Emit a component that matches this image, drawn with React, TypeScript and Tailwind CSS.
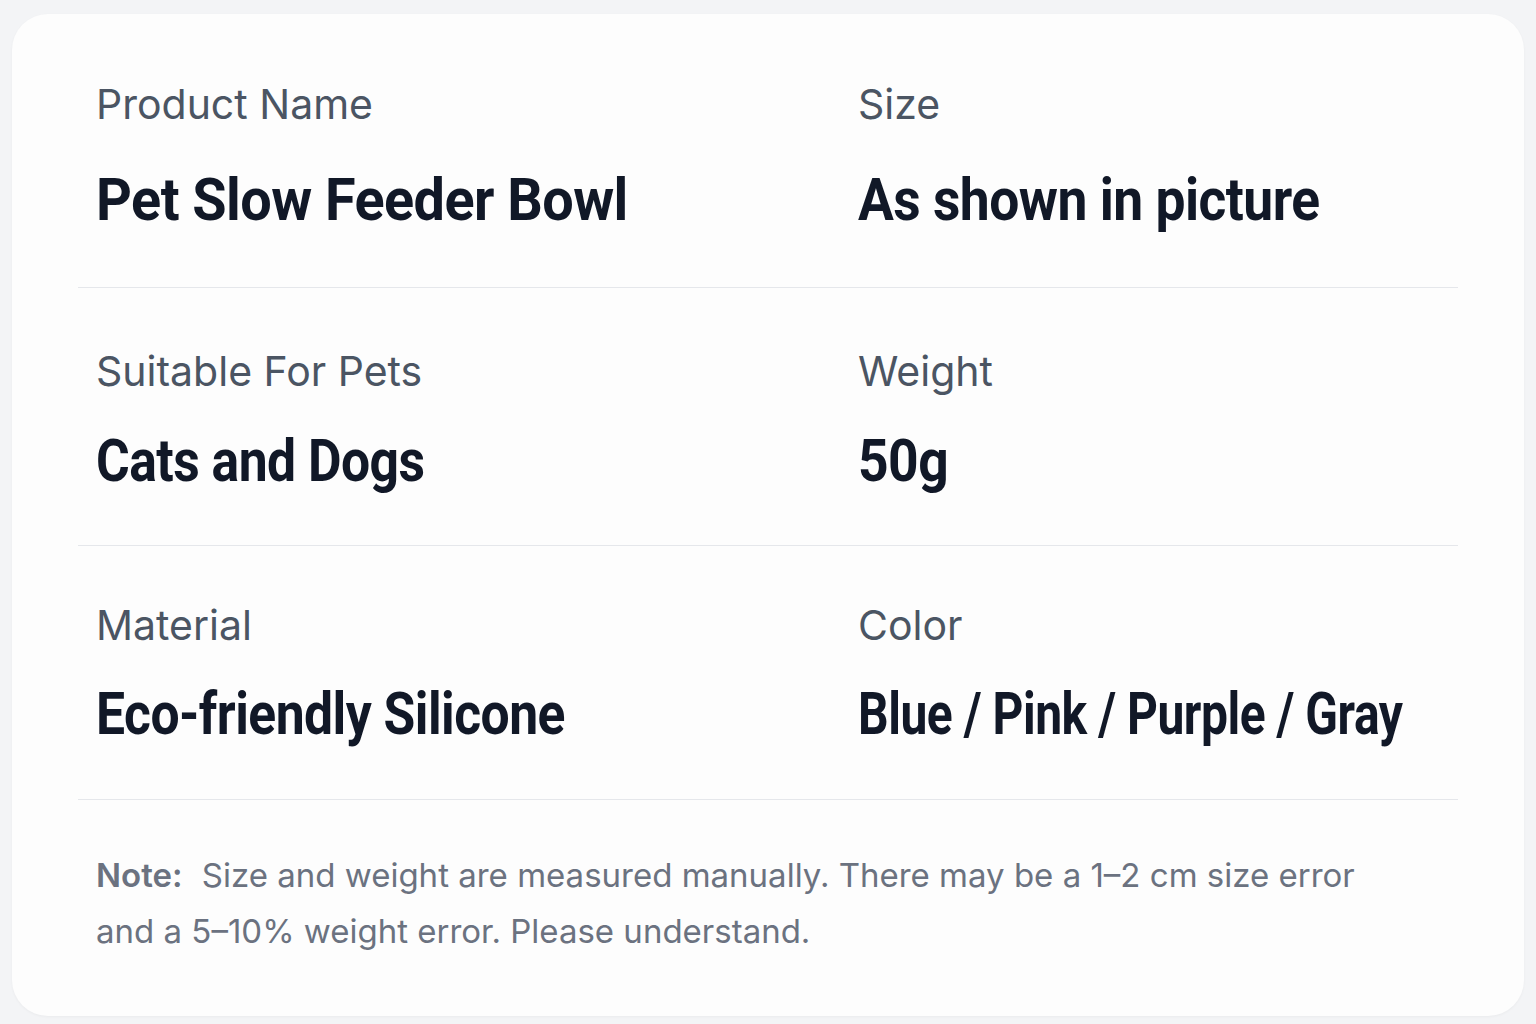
const specs = [
  {
    pad: "pt-[49px] pb-[53px]",
    gap: "gap-[37px]",
    cells: [
      { label: "Product Name", value: "Pet Slow Feeder Bowl", fit: "scale-x-[0.93]" },
      { label: "Size", value: "As shown in picture", fit: "scale-x-[0.89]" },
    ],
  },
  {
    pad: "pt-[58px] pb-[50px]",
    gap: "gap-[31px]",
    cells: [
      { label: "Suitable For Pets", value: "Cats and Dogs", fit: "scale-x-[0.86]" },
      { label: "Weight", value: "50g", fit: "scale-x-[0.89]" },
    ],
  },
  {
    pad: "pt-[54px] pb-[51px]",
    gap: "gap-[30px]",
    cells: [
      { label: "Material", value: "Eco-friendly Silicone", fit: "scale-x-[0.86]" },
      { label: "Color", value: "Blue / Pink / Purple / Gray", fit: "scale-x-[0.8]" },
    ],
  },
];

const App = () => {
  return (
    <div className="min-h-screen bg-[#f3f4f6] pl-[12px] pr-[12px] pt-[14px] pb-[8px] font-['Inter',sans-serif]">
      <div className="h-[1002px] rounded-[36px] bg-[#fdfdfd] px-[66px] pt-[16px] shadow-[0_1px_3px_rgba(0,0,0,0.04)]">
        {specs.map((row, i) => (
          <div
            key={i}
            className={`grid grid-cols-[762px_1fr] border-b border-[#e5e7eb] px-[18px] ${row.pad}`}
          >
            {row.cells.map((cell) => (
              <div key={cell.label} className={`flex flex-col items-start ${row.gap}`}>
                <span className="text-[41px] leading-[50px] font-normal text-[#4b5563]">
                  {cell.label}
                </span>
                <span
                  className={`origin-left whitespace-nowrap font-['Roboto',sans-serif] text-[60px] leading-[68px] font-bold tracking-[-0.01em] text-[#111827] ${cell.fit}`}
                >
                  {cell.value}
                </span>
              </div>
            ))}
          </div>
        ))}

        <p className="max-w-[1340px] px-[18px] pt-[47px] text-[33px] leading-[56px] text-[#6b7280]">
          <span className="mr-[10px] font-semibold text-[#6b7280]">Note:</span>{" "}
          Size and weight are measured manually. There may be a 1–2 cm size
          error and a 5–10% weight error. Please understand.
        </p>
      </div>
    </div>
  );
};

export default App;
